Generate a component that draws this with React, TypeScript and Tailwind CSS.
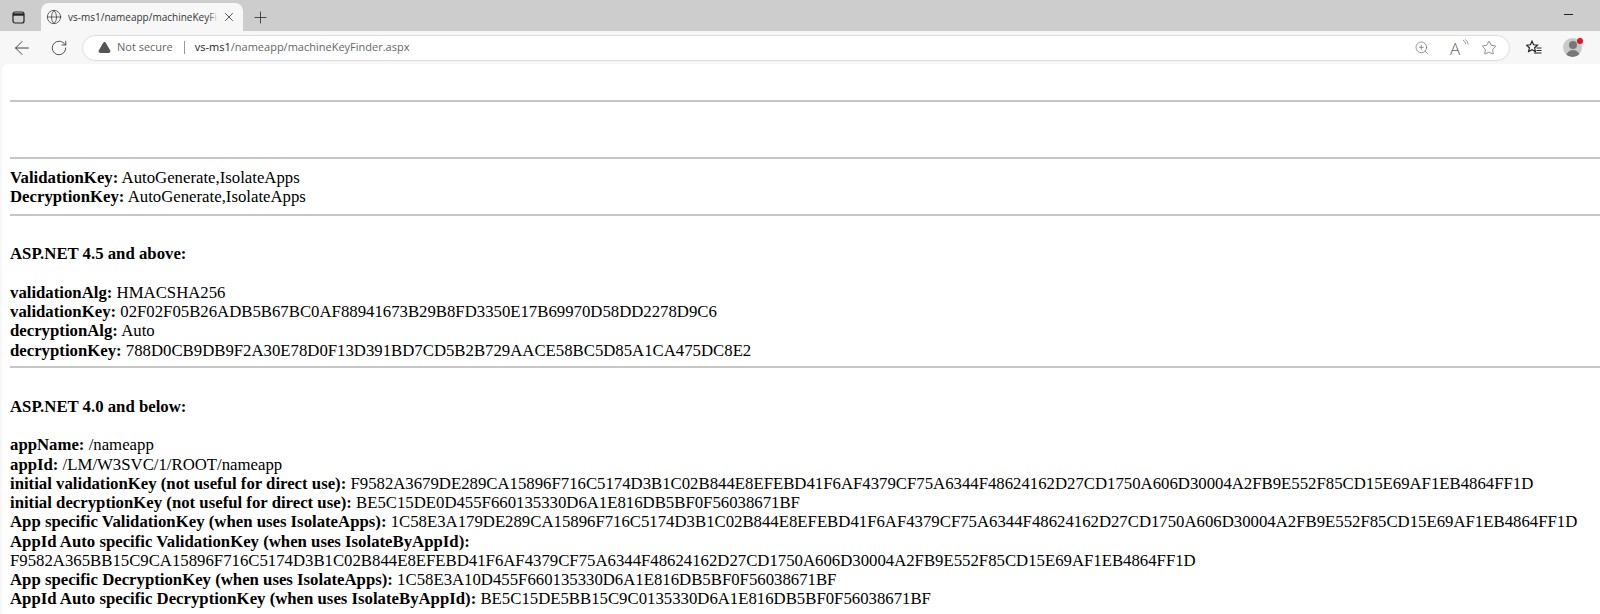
import React from "react";
import { ArrowLeft, RotateCw, Globe, X, Plus, ZoomIn, Star, TriangleAlert } from "lucide-react";

const Row = ({ label, value }: { label: string; value?: string }) => (
  <div className="h-[19.26px] leading-[19.26px] whitespace-nowrap">
    <b>{label}</b>
    {value ? ` ${value}` : ""}
  </div>
);

const Rule = ({ className }: { className: string }) => (
  <div className={`h-[2px] bg-[#c6c6c6] ${className}`} />
);

const App: React.FC = () => {
  return (
    <div className="relative w-[1600px] h-[614px] overflow-hidden flex flex-col bg-[#f7f7f7] font-['Liberation_Serif',serif] text-black">
      {/* tab strip */}
      <div className="h-[31px] shrink-0 bg-[#cdcdcd] flex items-end font-['Open_Sans',sans-serif]">
        <div className="w-[41px] h-[31px] flex items-center justify-center pr-[5px] pt-[3px]">
          <svg width="13" height="13" viewBox="0 0 13 13" fill="none" stroke="#222" strokeWidth="1.2">
            <rect x="1" y="1" width="11" height="11" rx="2" />
            <path d="M1 3.5h11" strokeWidth="2.4" />
          </svg>
        </div>
        <div className="w-[202px] h-[28px] bg-[#f7f7f7] rounded-t-[8px] flex items-center pl-[5px]">
          <Globe size={16} strokeWidth={1.1} color="#333" />
          <span className="relative ml-[6px] w-[150px] overflow-hidden whitespace-nowrap text-[10px] text-[#333]">
            vs-ms1/nameapp/machineKeyFinder.aspx
            <span className="absolute right-0 top-0 h-full w-[10px] bg-gradient-to-r from-transparent to-[#f7f7f7]" />
          </span>
          <X size={14} strokeWidth={1.4} color="#333" className="ml-[4px]" />
        </div>
        <div className="h-[28px] w-[34px] flex items-center justify-center">
          <Plus size={19} strokeWidth={1.1} color="#333" />
        </div>
        <div className="flex-1" />
        <div className="w-[9px] h-[1px] bg-[#222] mr-[27px] mb-[16px]" />
      </div>

      {/* toolbar */}
      <div className="h-[33px] shrink-0 flex items-center font-['Open_Sans',sans-serif]">
        <div className="w-[44px] flex justify-center">
          <ArrowLeft size={22} strokeWidth={1} color="#333" />
        </div>
        <div className="w-[30px] flex justify-center">
          <RotateCw size={18} strokeWidth={1.1} color="#333" />
        </div>
        <div className="ml-[8px] w-[1428px] h-[26px] bg-white rounded-[13px] border border-[#dcdcdc] flex items-center pl-[15px]">
          <TriangleAlert size={13} fill="#555" color="#555" />
          <span className="ml-[6px] text-[11px] text-[#666]">Not secure</span>
          <div className="w-[1px] h-[13px] bg-[#999] ml-[11px]" />
          <span className="ml-[10px] text-[11px] text-[#222]">vs-ms1</span>
          <span className="text-[11px] text-[#666]">/nameapp/machineKeyFinder.aspx</span>
          <div className="flex-1" />
          <ZoomIn size={16} strokeWidth={1} color="#666" />
          <div className="relative ml-[20px] w-[16px] h-[18px]">
            <span className="absolute left-0 bottom-0 text-[17px] font-light leading-none text-[#666]">A</span>
            <svg className="absolute right-[-3px] top-0" width="7" height="8" viewBox="0 0 7 8" fill="none" stroke="#888" strokeWidth="0.9">
              <path d="M1 1c1.5.8 2.5 2.5 2.5 4" />
              <path d="M3 0.5c2 1 3 3 3 5" />
            </svg>
          </div>
          <Star size={16} strokeWidth={1} color="#555" className="ml-[15px] mr-[12px]" />
        </div>
        <div className="ml-[15px] w-[18px] flex justify-center">
          <svg width="16" height="15" viewBox="0 0 16 15" fill="none" stroke="#222" strokeWidth="1.2">
            <path d="M6 1.2l1.6 3.6 3.9.4-2.9 2.6.8 3.9L6 9.8l-3.4 1.9.8-3.9L.5 5.2l3.9-.4z" />
            <path d="M10.5 8h5M10.5 10.5h5M8 13h7.5" />
          </svg>
        </div>
        <div className="ml-[20px] w-[19px] h-[19px] rounded-full bg-[#c9c9c9] overflow-hidden">
          <div className="mx-auto mt-[3px] w-[8px] h-[8px] rounded-full bg-[#777]" />
          <div className="mx-auto mt-[1px] w-[14px] h-[7px] rounded-t-full bg-[#777]" />
        </div>
        <div className="absolute left-[1577px] top-[38px] w-[6px] h-[6px] rounded-full bg-[#e81123]" />
      </div>

      {/* page */}
      <div className="flex-1 min-h-0 ml-[2px] bg-white rounded-tl-[6px] pl-[8px] text-[16.75px] overflow-hidden">
        <Rule className="mt-[36px]" />
        <Rule className="mt-[55px]" />
        <div className="mt-[9px]">
          <Row label="ValidationKey:" value="AutoGenerate,IsolateApps" />
          <Row label="DecryptionKey:" value="AutoGenerate,IsolateApps" />
        </div>
        <Rule className="mt-[7px]" />
        <div className="mt-[28px]">
          <Row label="ASP.NET 4.5 and above:" />
          <div className="h-[20px]" />
          <Row label="validationAlg:" value="HMACSHA256" />
          <Row label="validationKey:" value="02F02F05B26ADB5B67BC0AF88941673B29B8FD3350E17B69970D58DD2278D9C6" />
          <Row label="decryptionAlg:" value="Auto" />
          <Row label="decryptionKey:" value="788D0CB9DB9F2A30E78D0F13D391BD7CD5B2B729AACE58BC5D85A1CA475DC8E2" />
        </div>
        <Rule className="mt-[6px]" />
        <div className="mt-[29px]">
          <Row label="ASP.NET 4.0 and below:" />
          <div className="h-[19.26px]" />
          <Row label="appName:" value="/nameapp" />
          <Row label="appId:" value="/LM/W3SVC/1/ROOT/nameapp" />
          <Row label="initial validationKey (not useful for direct use):" value="F9582A3679DE289CA15896F716C5174D3B1C02B844E8EFEBD41F6AF4379CF75A6344F48624162D27CD1750A606D30004A2FB9E552F85CD15E69AF1EB4864FF1D" />
          <Row label="initial decryptionKey (not useful for direct use):" value="BE5C15DE0D455F660135330D6A1E816DB5BF0F56038671BF" />
          <Row label="App specific ValidationKey (when uses IsolateApps):" value="1C58E3A179DE289CA15896F716C5174D3B1C02B844E8EFEBD41F6AF4379CF75A6344F48624162D27CD1750A606D30004A2FB9E552F85CD15E69AF1EB4864FF1D" />
          <Row label="AppId Auto specific ValidationKey (when uses IsolateByAppId):" />
          <div className="h-[19.26px] leading-[19.26px] whitespace-nowrap">
            F9582A365BB15C9CA15896F716C5174D3B1C02B844E8EFEBD41F6AF4379CF75A6344F48624162D27CD1750A606D30004A2FB9E552F85CD15E69AF1EB4864FF1D
          </div>
          <Row label="App specific DecryptionKey (when uses IsolateApps):" value="1C58E3A10D455F660135330D6A1E816DB5BF0F56038671BF" />
          <Row label="AppId Auto specific DecryptionKey (when uses IsolateByAppId):" value="BE5C15DE5BB15C9C0135330D6A1E816DB5BF0F56038671BF" />
        </div>
      </div>
    </div>
  );
};

export default App;
